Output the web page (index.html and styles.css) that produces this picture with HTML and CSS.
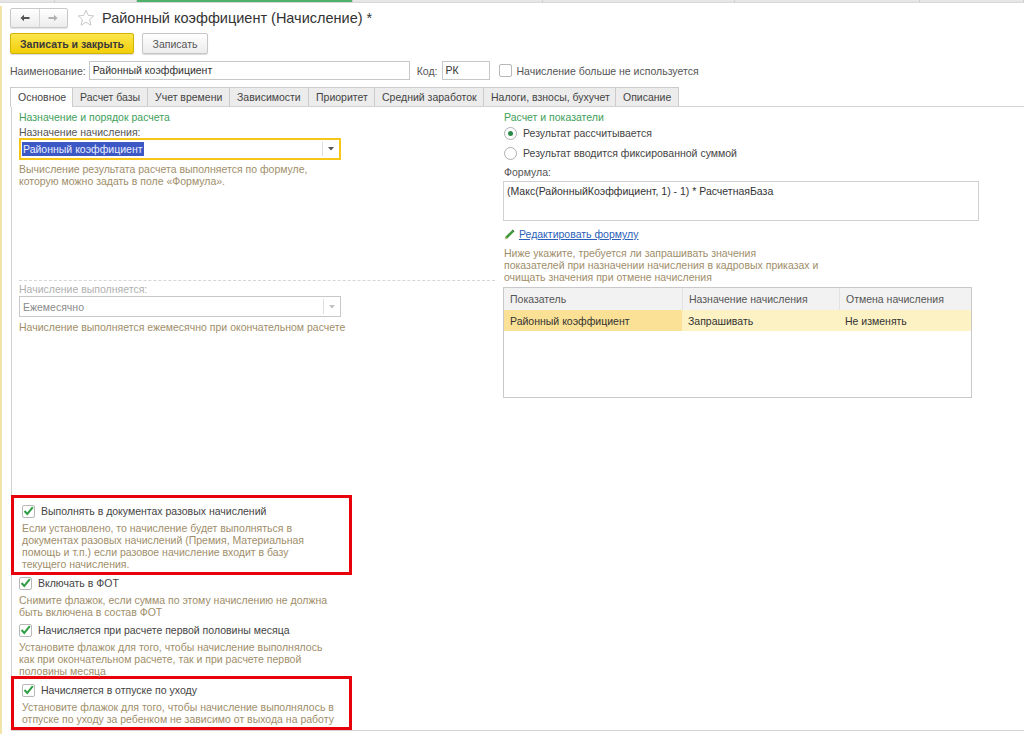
FILE: index.html
```html
<!DOCTYPE html>
<html lang="ru">
<head>
<meta charset="UTF-8" />
<title>Районный коэффициент (Начисление)</title>
<link rel="stylesheet" href="styles.css">
</head>
<body>
  <div class="topstrip">
    <span class="seg" style="width:55px"></span>
    <span class="seg" style="width:82px"></span>
    <span class="seg active" style="width:216px"></span>
    <span class="seg" style="width:190px"></span>
    <span class="seg" style="width:192px"></span>
    <span class="seg" style="width:185px"></span>
    <span class="seg" style="width:104px"></span>
  </div>

  <div class="window">
    <div class="head">
      <div class="nav">
        <button class="nav-btn">
          <svg width="10" height="8" viewBox="0 0 10 8"><path d="M0.5 4 L4 0.8 L4 3 L9.5 3 L9.5 5 L4 5 L4 7.2 Z" fill="#555"/></svg>
        </button>
        <button class="nav-btn">
          <svg width="10" height="8" viewBox="0 0 10 8"><path d="M9.5 4 L6 0.8 L6 3 L0.5 3 L0.5 5 L6 5 L6 7.2 Z" fill="#b0b0b0"/></svg>
        </button>
      </div>
      <svg class="star" width="18" height="18" viewBox="0 0 18 18"><path d="M9 1.2 L11.3 6.4 L16.8 6.9 L12.6 10.6 L13.9 16.2 L9 13.2 L4.1 16.2 L5.4 10.6 L1.2 6.9 L6.7 6.4 Z" fill="none" stroke="#c8c8c8" stroke-width="1"/></svg>
      <h1 class="title">Районный коэффициент (Начисление) *</h1>
    </div>

    <div class="toolbar">
      <button class="btn btn-primary">Записать и закрыть</button>
      <button class="btn">Записать</button>
    </div>

    <div class="name-row">
      <label class="lbl">Наименование:</label>
      <div class="input name-input">Районный коэффициент</div>
      <label class="lbl code-lbl">Код:</label>
      <div class="input code-input">РК</div>
      <span class="box"></span>
      <span class="lbl">Начисление больше не используется</span>
    </div>

    <div class="tabs">
      <div class="tab active">Основное</div>
      <div class="tab">Расчет базы</div>
      <div class="tab">Учет времени</div>
      <div class="tab">Зависимости</div>
      <div class="tab">Приоритет</div>
      <div class="tab">Средний заработок</div>
      <div class="tab">Налоги, взносы, бухучет</div>
      <div class="tab">Описание</div>
    </div>

    <div class="panel">
      <div class="col-left">
        <div class="group-title">Назначение и порядок расчета</div>
        <div class="field-label">Назначение начисления:</div>
        <div class="select focused">
          <span class="select-value"><span class="selected">Районный коэффициент</span></span>
          <span class="select-arrow"><svg width="6" height="4" viewBox="0 0 6 4"><path d="M0 0 L6 0 L3 3.5 Z" fill="#555"/></svg></span>
        </div>
        <div class="hint">Вычисление результата расчета выполняется по формуле,<br>которую можно задать в поле «Формула».</div>

        <div class="dashed"></div>

        <div class="field-label disabled">Начисление выполняется:</div>
        <div class="select disabled">
          <span class="select-value">Ежемесячно</span>
          <span class="select-arrow"><svg width="6" height="4" viewBox="0 0 6 4"><path d="M0 0 L6 0 L3 3.5 Z" fill="#c0c0c0"/></svg></span>
        </div>
        <div class="hint">Начисление выполняется ежемесячно при окончательном расчете</div>

        <div class="checks">
          <div class="mark">
            <div class="check-row"><span class="box checked"><svg width="11" height="10" viewBox="0 0 11 10"><path d="M1.5 5 L4.3 8 L9.8 1.2" fill="none" stroke="#2f9e44" stroke-width="2"/></svg></span>Выполнять в документах разовых начислений</div>
            <div class="hint">Если установлено, то начисление будет выполняться в<br>документах разовых начислений (Премия, Материальная<br>помощь и т.п.) если разовое начисление входит в базу<br>текущего начисления.</div>
          </div>
          <div class="check-group">
            <div class="check-row"><span class="box checked"><svg width="11" height="10" viewBox="0 0 11 10"><path d="M1.5 5 L4.3 8 L9.8 1.2" fill="none" stroke="#2f9e44" stroke-width="2"/></svg></span>Включать в ФОТ</div>
            <div class="hint">Снимите флажок, если сумма по этому начислению не должна<br>быть включена в состав ФОТ</div>
          </div>
          <div class="check-group third">
            <div class="check-row"><span class="box checked"><svg width="11" height="10" viewBox="0 0 11 10"><path d="M1.5 5 L4.3 8 L9.8 1.2" fill="none" stroke="#2f9e44" stroke-width="2"/></svg></span>Начисляется при расчете первой половины месяца</div>
            <div class="hint">Установите флажок для того, чтобы начисление выполнялось<br>как при окончательном расчете, так и при расчете первой<br>половины месяца</div>
          </div>
          <div class="mark last">
            <div class="check-row"><span class="box checked"><svg width="11" height="10" viewBox="0 0 11 10"><path d="M1.5 5 L4.3 8 L9.8 1.2" fill="none" stroke="#2f9e44" stroke-width="2"/></svg></span>Начисляется в отпуске по уходу</div>
            <div class="hint">Установите флажок для того, чтобы начисление выполнялось в<br>отпуске по уходу за ребенком не зависимо от выхода на работу</div>
          </div>
        </div>
      </div>

      <div class="col-right">
        <div class="group-title">Расчет и показатели</div>
        <div class="radio-row"><span class="radio on"></span>Результат рассчитывается</div>
        <div class="radio-row"><span class="radio"></span>Результат вводится фиксированной суммой</div>
        <div class="field-label formula-label">Формула:</div>
        <div class="textarea">(Макс(РайонныйКоэффициент, 1) - 1) * РасчетнаяБаза</div>
        <div class="link-row">
          <svg width="11" height="11" viewBox="0 0 11 11"><path d="M1 10 L1.6 7.6 L7.8 1.4 L9.6 3.2 L3.4 9.4 Z" fill="#3f9a3a"/><path d="M7.8 1.4 L8.7 0.5 L10.5 2.3 L9.6 3.2 Z" fill="#2d6e2a"/><path d="M1 10 L1.6 7.6 L3.4 9.4 Z" fill="#e0b070"/></svg>
          <a href="#" class="link">Редактировать формулу</a>
        </div>
        <div class="hint">Ниже укажите, требуется ли запрашивать значения<br>показателей при назначении начисления в кадровых приказах и<br>очищать значения при отмене начисления</div>
        <div class="grid">
          <div class="grid-head">
            <div class="c1">Показатель</div>
            <div class="c2">Назначение начисления</div>
            <div class="c3">Отмена начисления</div>
          </div>
          <div class="grid-row">
            <div class="c1 cur">Районный коэффициент</div>
            <div class="c2">Запрашивать</div>
            <div class="c3">Не изменять</div>
          </div>
        </div>
      </div>
    </div>
  </div>
</body>
</html>
```

FILE: styles.css
```css
* {
  box-sizing: border-box;
  margin: 0;
  padding: 0;
}

body {
  background: #fff;
  font-family: 'Liberation Sans', Arial, sans-serif;
  font-size: 10.5px;
  color: #333;
  width: 1024px;
  height: 734px;
  overflow: hidden;
}

.topstrip {
  display: flex;
  height: 3px;
  background: #e6e6e6;
  border-bottom: 1px solid #d8d8d8;
}

.topstrip .seg {
  border-right: 1px solid #cfcfcf;
}

.topstrip .seg.active {
  background: #4fb06c;
}

.window {
  border-left: 2px solid #f1e4a8;
  margin-top: 3px;
  padding-left: 8px;
  height: 728px;
}

/* шапка */
.head {
  display: flex;
  align-items: center;
  height: 24px;
  margin-top: 1px;
}

.nav {
  display: flex;
  width: 58px;
  height: 20px;
  border: 1px solid #c9c9c9;
  border-radius: 2px;
  background: linear-gradient(#fff, #ececec);
  box-shadow: 0 1px 1px rgba(0,0,0,0.12);
}

.nav-btn {
  flex: 1;
  border: none;
  background: none;
  display: flex;
  align-items: center;
  justify-content: center;
}

.nav-btn + .nav-btn {
  border-left: 1px solid #d4d4d4;
}

.star {
  margin-left: 9px;
}

.title {
  margin-left: 7px;
  font-size: 14.5px;
  font-weight: normal;
  color: #333;
}

.toolbar {
  display: flex;
  gap: 8px;
  margin-top: 3px;
}

.btn {
  height: 21px;
  padding: 0 8px;
  font-family: inherit;
  font-size: 10.5px;
  color: #555;
  white-space: nowrap;
  border: 1px solid #c6c6c6;
  border-radius: 2px;
  background: linear-gradient(#fff, #ececec);
  box-shadow: 0 1px 1px rgba(0,0,0,0.15);
}

.btn-primary {
  width: 124px;
  font-weight: bold;
  color: #3a3a3a;
  border-color: #d3b400;
  background: linear-gradient(#fbe54c, #f2cf0b);
}

.btn:not(.btn-primary) {
  width: 66px;
}

/* реквизиты */
.name-row {
  display: flex;
  align-items: center;
  height: 19px;
  margin-top: 7px;
}

.lbl {
  color: #555;
  white-space: nowrap;
}

.input {
  height: 19px;
  line-height: 17px;
  padding: 0 3px;
  border: 1px solid #c8c8c8;
  color: #333;
  background: #fff;
}

.name-input {
  width: 321px;
  margin-left: 3px;
}

.code-lbl {
  margin-left: 7px;
}

.code-input {
  width: 48px;
  margin-left: 4px;
}

.name-row .box {
  margin-left: 9px;
  margin-right: 5px;
}

.box {
  display: inline-flex;
  align-items: center;
  justify-content: center;
  width: 13px;
  height: 13px;
  border: 1px solid #b8b8b8;
  border-radius: 2px;
  background: #fff;
  flex: none;
}

/* закладки */
.tabs {
  display: flex;
  margin-top: 7px;
  margin-left: 1px;
  height: 19px;
}

.tab {
  padding: 0 7px;
  line-height: 18px;
  border: 1px solid #cbcbcb;
  border-bottom: none;
  margin-left: -1px;
  background: #ececec;
  color: #444;
  white-space: nowrap;
}

.tab:first-child { width: 63px; }
.tab:nth-child(2) { width: 76px; }
.tab:nth-child(3) { width: 83px; }
.tab:nth-child(4) { width: 80px; }
.tab:nth-child(5) { width: 67px; }
.tab:nth-child(6) { width: 110px; }
.tab:nth-child(7) { width: 133px; }
.tab:nth-child(8) { width: 64px; }

.tab.active {
  background: #fff;
  position: relative;
  z-index: 1;
  height: 20px;
}

.panel {
  display: flex;
  margin-left: 1px;
  width: 1030px;
  height: 625px;
  border: 1px solid #d2d2d2;
  padding: 4px 0 0 7px;
}

.col-left {
  width: 485px;
  flex: none;
}

.col-right {
  flex: 1;
}

.group-title {
  color: #3ea05a;
  line-height: 12px;
}

.field-label {
  margin-top: 3px;
  line-height: 12px;
  color: #555;
}

.field-label.disabled {
  color: #b0b0b0;
}

.select {
  display: flex;
  width: 322px;
  height: 22px;
  border: 1px solid #c8c8c8;
  background: #fff;
}

.select.focused {
  border: 2px solid #f5c518;
}

.select-value {
  flex: 1;
  display: flex;
  align-items: center;
  padding-left: 1px;
}

.select.disabled {
  height: 21px;
  margin-top: 1px;
  color: #8a8a8a;
}

.select.disabled .select-value {
  padding-left: 3px;
}

.selected {
  background: #3c58c4;
  color: #e8ecff;
  line-height: 14px;
  padding: 0 1px;
}

.select-arrow {
  width: 17px;
  display: flex;
  align-items: center;
  justify-content: center;
  border-left: 1px solid #dedede;
  margin: 2px 0;
}

.hint {
  margin-top: 3px;
  line-height: 12px;
  color: #a08e6a;
}

.dashed {
  width: 476px;
  margin-top: 93px;
  border-top: 1px dashed #d6d6d6;
}

.dashed + .field-label {
  margin-top: 2px;
}

.select.disabled + .hint {
  margin-top: 4px;
}

/* флажки */
.checks {
  margin-top: 162px;
}

.check-row {
  display: flex;
  align-items: center;
  gap: 6px;
  height: 16px;
  color: #444;
}

.mark {
  width: 341px;
  margin-left: -8px;
  padding: 5px 0 2px 8px;
  border: 3px solid #e8000b;
}

.mark.last {
  margin-top: -1px;
  padding: 3px 0 2px 8px;
}

.check-group.third {
  margin-top: 4px;
}

/* правая колонка */
.radio-row {
  display: flex;
  align-items: center;
  gap: 6px;
  height: 20px;
  color: #444;
}

.radio {
  width: 13px;
  height: 13px;
  border: 1px solid #b0b0b0;
  border-radius: 50%;
  background: #fff;
  display: flex;
  align-items: center;
  justify-content: center;
}

.radio.on::after {
  content: "";
  width: 5px;
  height: 5px;
  border-radius: 50%;
  background: #2a8a45;
}

.formula-label {
  margin-top: 3px;
}

.textarea {
  width: 476px;
  height: 40px;
  margin-top: 3px;
  margin-left: -1px;
  padding: 2px 3px;
  line-height: 14px;
  border: 1px solid #d0d0d0;
  color: #333;
}

.link-row {
  display: flex;
  align-items: center;
  gap: 4px;
  margin-top: 6px;
  height: 14px;
}

.link {
  color: #2b5fb8;
  text-decoration: underline;
}

.link-row + .hint {
  margin-top: 6px;
}

.grid {
  width: 469px;
  height: 111px;
  margin-top: 4px;
  margin-left: -1px;
  border: 1px solid #c9c9c9;
}

.grid-head,
.grid-row {
  display: flex;
}

.grid-head {
  height: 22px;
  background: #f2f2f2;
  color: #555;
}

.grid-head > div,
.grid-row > div {
  display: flex;
  align-items: center;
  padding-left: 6px;
}

.grid-head > div + div {
  border-left: 1px solid #e2e2e2;
}

.c1 { width: 178px; }
.c2 { width: 157px; }
.c3 { flex: 1; }

.grid-row {
  height: 21px;
  background: #fdf2c4;
  color: #333;
}

.grid-row .cur {
  background: #fbe195;
}
```
